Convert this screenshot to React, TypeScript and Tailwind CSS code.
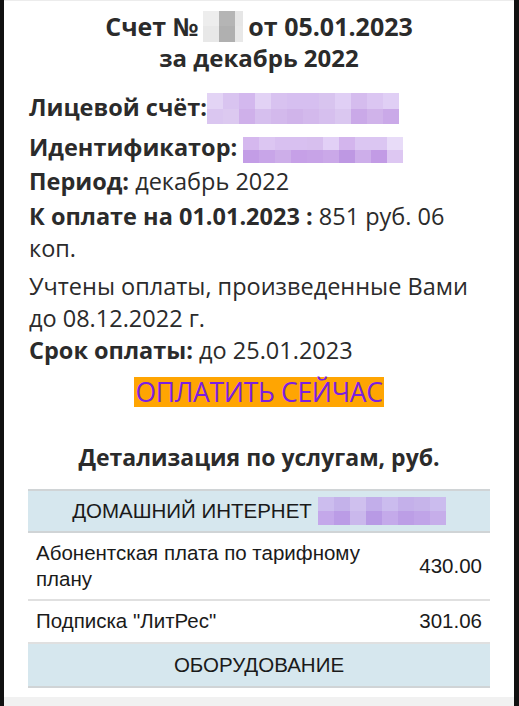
import React from "react";

const Mosaic = ({ rows, cell, h }: { rows: string[][]; cell: number; h: number }) => (
  <span className="inline-flex flex-col align-middle">
    {rows.map((r, i) => (
      <span key={i} className="flex">
        {r.map((c, j) => (
          <span key={j} style={{ background: c, width: cell, height: h }} />
        ))}
      </span>
    ))}
  </span>
);

const acc = [
  ["#e3d4f5", "#d9c4f0", "#d3b8ee", "#e2d2f5", "#d8c2f0", "#d6bff0", "#d6bff0", "#d8c4ef", "#e0cff5", "#d5bcee", "#dbc6f2", "#e0cff5"],
  ["#dac6f0", "#dcc9f0", "#cfb0ea", "#d6bfee", "#d3b9ec", "#d0b4ea", "#d3b9ec", "#d6bfee", "#dac7f0", "#caa9e8", "#d0b3ea", "#caa9e8"],
];
const ident = [
  ["#d5b8ee", "#dcc6f2", "#d8c0f0", "#d8c0f0", "#d7bfee", "#e2d0f6", "#d3b5ed", "#dbc6f2", "#dbc6f2", "#e8dcf8"],
  ["#c39de6", "#c8a5e8", "#cdaee9", "#c6a0e7", "#c7a3e7", "#caa8e8", "#be98e3", "#cdaeea", "#c29be5", "#ddc7f2"],
];
const num = [
  ["#ededed", "#b5b5b5", "#e6e6e6"],
  ["#e8e8e8", "#b0b0b0", "#e8e8e8"],
];
const inet = [
  ["#ccbdee", "#c4b2ea", "#cfc0ee", "#c2aeea", "#cbbcee", "#c4b0ea", "#c6b4ea", "#cbbcee"],
  ["#c4a8ea", "#bb9ce6", "#cab8ec", "#b89ae5", "#c4aaea", "#bc9ee6", "#c0a4e8", "#c6aeea"],
];

export default function App() {
  return (
    <div className="h-[706px] w-[519px] bg-[#111111] pl-[4px] pr-[5px] overflow-hidden">
      <div className="h-full bg-white flex flex-col border-t border-[#ececec]" style={{ fontFamily: "'Open Sans', 'Noto Sans', sans-serif" }}>
        <div className="text-[#2b2b2b] px-[25px]">
          <div className="mt-[9px] text-center font-bold text-[25px] leading-[32px]">
            <div className="flex justify-center items-center">
              <span>Счет №</span>
              <span className="mx-[5px] flex flex-col">
                {num.map((r, i) => (
                  <span key={i} className="flex">
                    {r.map((c, j) => (
                      <span key={j} style={{ background: c, width: j === 2 ? 8 : 16, height: 15.5 }} />
                    ))}
                  </span>
                ))}
              </span>
              <span>от 05.01.2023</span>
            </div>
            <div className="text-[24px]">за декабрь 2022</div>
          </div>

          <div className="text-[23.5px] leading-[32px]">
            <div className="mt-[16px] flex items-center">
              <b className="font-bold">Лицевой счёт:</b>
              <span className="ml-[0px]"><Mosaic rows={acc} cell={16} h={15.5} /></span>
            </div>
            <div className="mt-[7px] flex items-center">
              <b className="font-bold">Идентификатор:</b>
              <span className="ml-[6px]"><Mosaic rows={ident} cell={16} h={13} /></span>
            </div>
            <div className="mt-[2px]"><b className="font-bold">Период:</b> декабрь 2022</div>
            <div className="mt-[3px]">
              <b className="font-bold">К оплате на 01.01.2023 :</b> 851 руб. 06
              <br />
              коп.
            </div>
            <div className="mt-[6px]">
              Учтены оплаты, произведенные Вами
              <br />
              до 08.12.2022 г.
            </div>
            <div><b className="font-bold">Срок оплаты:</b> до 25.01.2023</div>
          </div>

          <div className="mt-[11px] flex justify-center">
            <span className="bg-[#ffa502] text-[#7b1fe0] text-[26.5px] leading-[30px] h-[30px] px-[1px] tracking-[-0.3px]">ОПЛАТИТЬ СЕЙЧАС</span>
          </div>

          <div className="mt-[34px] text-center font-bold text-[23px] leading-[32px]">Детализация по услугам, руб.</div>
        </div>

        <div className="mx-[24px] mt-[16px] text-[#1a1a1a] text-[20.5px]" style={{ fontFamily: "'Liberation Sans', Arial, sans-serif" }}>
          <div className="h-[44px] bg-[#d6e7ee] border-t-2 border-b-2 border-[#d0d4d6] flex items-center justify-center gap-[6px]">
            <span>ДОМАШНИЙ ИНТЕРНЕТ</span>
            <Mosaic rows={inet} cell={16} h={14} />
          </div>
          <div className="h-[68px] border-b-2 border-[#e0e0e0] flex items-center justify-between pl-[8px] pr-[8px]">
            <span className="w-[340px] leading-[26px]">Абонентская плата по тарифному плану</span>
            <span>430.00</span>
          </div>
          <div className="h-[43px] border-b-2 border-[#e0e0e0] flex items-center justify-between pl-[8px] pr-[8px]">
            <span>Подписка "ЛитРес"</span>
            <span>301.06</span>
          </div>
          <div className="h-[44px] bg-[#d6e7ee] border-b-2 border-[#d0d4d6] flex items-center justify-center">
            <span>ОБОРУДОВАНИЕ</span>
          </div>
        </div>
        <div className="flex-1" />
        <div className="h-[9px] bg-[#f1f1f1]" />
      </div>
    </div>
  );
}
